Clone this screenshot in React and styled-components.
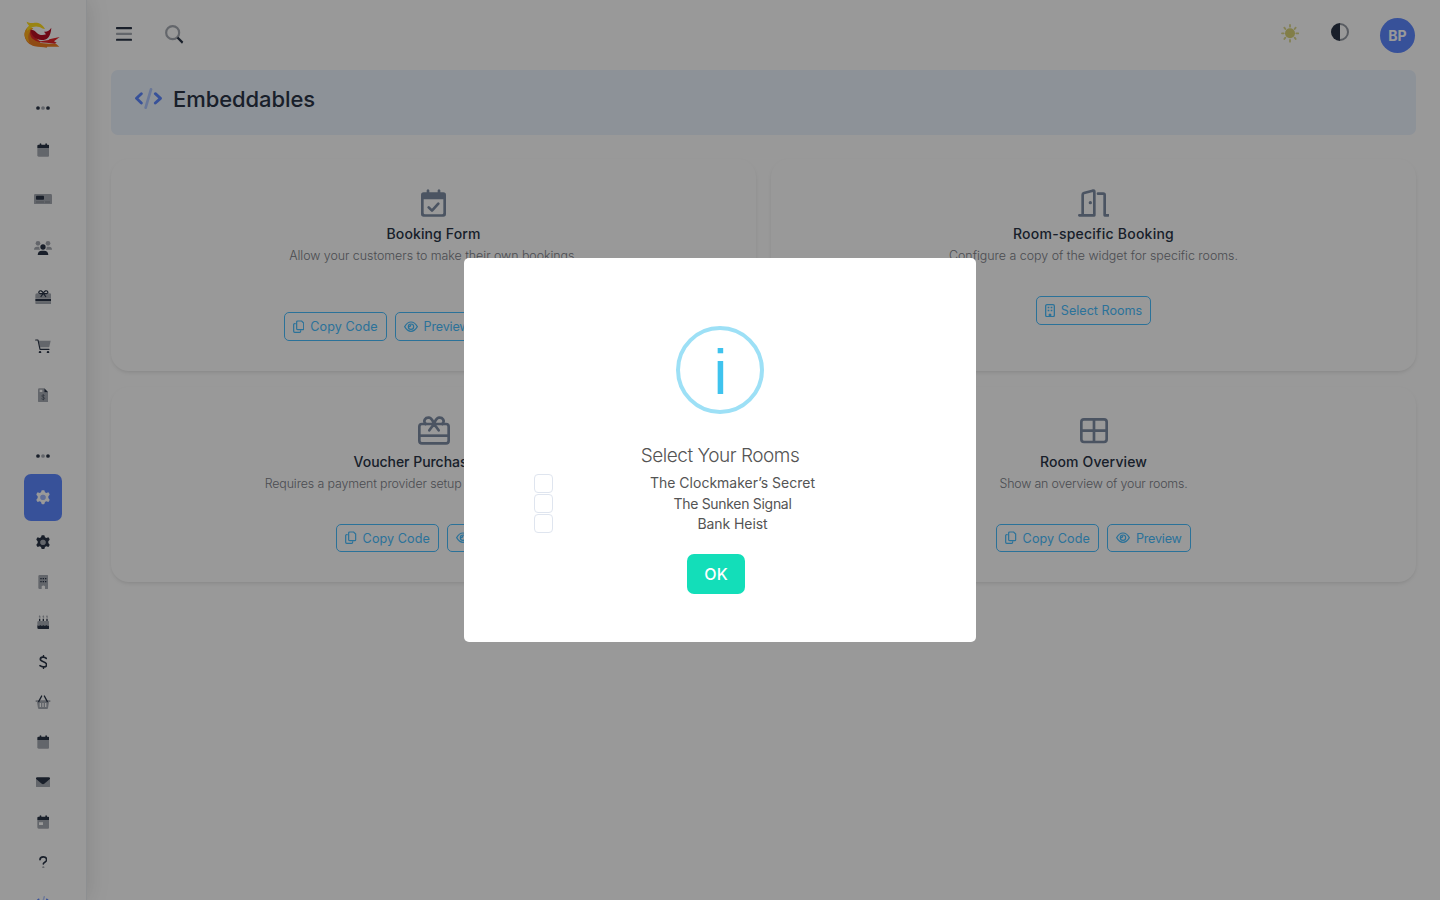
import React from "react"
import styled, { createGlobalStyle } from "styled-components"

const GlobalStyle = createGlobalStyle`
  * {
    box-sizing: border-box;
  }
  body {
    margin: 0;
    overflow: hidden;
    background: #fff;
    color: #2a3547;
    font-family: Inter, "Liberation Sans", sans-serif;
    font-size: 14px;
  }
`

const Page = styled.div`
  display: flex;
  height: 900px;
  overflow: hidden;
`

const Sidebar = styled.aside`
  flex: none;
  display: flex;
  flex-direction: column;
  align-items: center;
  width: 87px;
  height: 900px;
  overflow: hidden;
  border-right: 1px solid #eceef2;
  box-shadow: 0 0 22px rgba(0, 0, 0, 0.13);
`

const Brand = styled.div`
  flex: none;
  height: 90px;
  padding: 21px 1px 0 0;
`

const NavDivider = styled.div`
  flex: none;
  display: flex;
  align-items: center;
  height: ${p => (p.$spaced ? 54.4 : 35.6)}px;
  padding-top: ${p => (p.$spaced ? 19 : 0)}px;
`

const NavItem = styled.a`
  flex: none;
  display: flex;
  align-items: center;
  justify-content: center;
  width: 38px;
  height: ${p => (p.$sub ? 40 : 49)}px;
  color: ${p => p.$color || "#2a3547"};
`

const ActiveItem = styled(NavItem)`
  height: 47px;
  margin-bottom: 1px;
  border-radius: 7px;
  background: #5d87ff;
  color: #fff;
`

const Main = styled.main`
  flex: 1;
  padding: 0 24px;
`

const Header = styled.header`
  display: flex;
  align-items: center;
  height: 70px;
  padding: 0 1px 0 5px;
`

const HeaderIcon = styled.div`
  display: flex;
  width: ${p => p.$width}px;
  margin-top: ${p => p.$drop || 0}px;
`

const Spacer = styled.div`
  flex: 1;
`

const Avatar = styled.div`
  display: flex;
  align-items: center;
  justify-content: center;
  width: 35px;
  height: 35px;
  margin-top: 1px;
  padding-bottom: 1px;
  border-radius: 50%;
  background: #5d87ff;
  color: #fff;
  font-size: 14px;
  font-weight: 700;
`

const TitleBar = styled.div`
  display: flex;
  height: 65px;
  padding: 15px 24px 0;
  gap: 11px;
  border-radius: 7px;
  background: #ebf3fe;
`

const TitleIcon = styled.div`
  padding-top: 3px;
  color: #5d87ff;
`

const PageTitle = styled.h1`
  margin: 0;
  font-size: 22px;
  font-weight: 500;
  line-height: 28px;
  letter-spacing: -0.08px;
`

const Cards = styled.div`
  display: grid;
  grid-template-columns: 1fr 1fr;
  gap: 16px 15px;
  margin-top: 24px;
`

const Card = styled.section`
  display: flex;
  flex-direction: column;
  align-items: center;
  padding-bottom: 30px;
  border-radius: 18px;
  background: #fff;
  box-shadow: 0 2px 4px -1px rgba(0, 0, 0, 0.13);
`

const CardIcon = styled.div`
  display: flex;
  align-items: center;
  height: 32px;
  margin-top: 28px;
  color: #7d8ca4;
`

const CardTitle = styled.h2`
  margin: 5px 0 0;
  font-size: 14px;
  font-weight: 500;
  line-height: 20px;
  letter-spacing: ${p => p.$track}px;
`

const CardText = styled.p`
  margin: 2px 0 0;
  color: #7c8088;
  font-size: 12.4px;
  font-weight: 300;
  line-height: 20px;
  letter-spacing: ${p => p.$track}px;
`

const Actions = styled.div`
  display: flex;
  gap: 8px;
  width: ${p => p.$width}px;
  margin-top: ${p => p.$top || 30}px;
`

const OutlineButton = styled.button`
  display: flex;
  align-items: center;
  gap: 6px;
  height: ${p => p.$height || 28}px;
  padding: 0 8px;
  border: 1px solid #49beff;
  border-radius: 5px;
  background: transparent;
  color: #49beff;
  font-family: inherit;
  font-size: 12.6px;
  font-weight: 400;
  letter-spacing: ${p => p.$track || 0}px;
  white-space: nowrap;
`

const Backdrop = styled.div`
  position: fixed;
  inset: 0;
  display: flex;
  align-items: center;
  justify-content: center;
  background: rgba(0, 0, 0, 0.4);
`

const Modal = styled.div`
  display: flex;
  flex-direction: column;
  align-items: center;
  width: 512px;
  height: 384px;
  padding: 68px 0 0;
  border-radius: 5px;
  background: #fff;
  color: #545454;
`

const InfoMark = styled.div`
  display: flex;
  align-items: center;
  justify-content: center;
  width: 88px;
  height: 88px;
  padding: 4px 0 0 1px;
  border: 4px solid #9de0f6;
  border-radius: 50%;
  color: #3fc3ee;
  font-family: "Liberation Sans", sans-serif;
  font-size: 62.5px;
  line-height: 75px;
`

const ModalTitle = styled.h3`
  margin: 29px 0 0;
  font-size: 19px;
  font-weight: 300;
  line-height: 25px;
  letter-spacing: -0.48px;
`

const RoomList = styled.div`
  width: 372px;
  margin-top: 5px;
`

const RoomRow = styled.label`
  display: flex;
  align-items: center;
  height: 20.4px;
`

const Checkbox = styled.input`
  appearance: none;
  flex: none;
  width: 19px;
  height: 19px;
  margin: 0;
  border: 1px solid #dfe5ef;
  border-radius: 4px;
`

const RoomName = styled.span`
  flex: 1;
  padding-left: 6px;
  line-height: 20px;
  text-align: center;
  letter-spacing: ${p => p.$track}px;
`

const OkButton = styled.button`
  width: 58px;
  height: 40px;
  margin: 20px 8px 0 0;
  border: 0;
  border-radius: 7px;
  background: #13deb9;
  color: #fff;
  font-family: inherit;
  font-size: 16px;
  font-weight: 500;
`

const Svg = styled.svg`
  display: block;
  flex: none;
`

const Faded = styled.g`
  opacity: 0.42;
`

// duotone icons are drawn on a grid three times their size
const Icon = ({ w, h, children }) => (
  <Svg width={w / 3} height={h / 3} viewBox={`0 0 ${w} ${h}`} fill="currentColor">
    {children}
  </Svg>
)

const Logo = () => (
  <Icon w={110} h={82}>
    <path
      fill="#ef7d22"
      d="M10 20C3 28 0 37 2 46c3 16 14 26 30 30 12 3 26 2 36 4l2-3h36l-10-9H76L50 66 20 28z"
    />
    <path fill="#ffae1c" d="M12 18C4 25 1 34 2 45c3 10 8 17 16 22C10 52 11 38 22 28l6-6z" />
    <path
      fill="#e5262a"
      d="M20 26c-4 10-1 22 8 29 10 8 24 10 40 10l24 3 6-3-8-4 17-13-31 7-2 2-24 4C38 58 26 42 20 26z"
    />
    <path
      fill="#b90f24"
      d="M20 26c1 17 14 30 33 31 17 0 27-9 29-37-6 9-12 13-22 12l6 8C56 44 44 42 38 35c-5-6-10-9-18-9z"
    />
    <path
      fill="#ffdc1f"
      d="M8 2c8 4 13 4 20 4 14-2 25 1 35 18-8-1-11-4-17-6-10-3-20-2-28 6l-9 6c-1-8 1-12 6-16C12 10 9 8 8 2z"
    />
  </Icon>
)

const Dots = () => (
  <Icon w={42} h={12}>
    <circle cx="6" cy="6" r="5.6" />
    <Faded>
      <circle cx="21" cy="6" r="5.6" />
    </Faded>
    <circle cx="36" cy="6" r="5.6" />
  </Icon>
)

const Calendar = ({ day }) => (
  <Icon w={38} h={42}>
    <Faded>
      <path
        fillRule="evenodd"
        d={`M1 15h36v22q0 4-4 4H5q-4 0-4-4z${day ? "M6 22v8h12v-8z" : ""}`}
      />
    </Faded>
    <path d="M1 15V8q0-3 4-3h3V2q2-3 5 0v3h12V2q2-3 5 0v3h3q4 0 4 3v7z" />
  </Icon>
)

const MoneyCard = () => (
  <Icon w={54} h={32}>
    <Faded>
      <rect width="54" height="32" rx="4" />
    </Faded>
    <rect x="6" y="5" width="24" height="12" rx="2" />
    <path opacity=".6" d="M6 23h24v2H6zM33 23h15v2H33z" />
  </Icon>
)

const Users = () => (
  <Icon w={54} h={44}>
    <Faded>
      <circle cx="12" cy="7" r="7" />
      <circle cx="42" cy="7" r="7" />
      <path d="M0 26q0-9 9-9h7q-1 6 3 9zM54 26q0-9-9-9h-7q1 6-3 9z" />
    </Faded>
    <circle cx="27" cy="18" r="8" />
    <path d="M11 43q0-14 13-14h6q13 0 13 14z" />
  </Icon>
)

const Gift = () => (
  <Icon w={50} h={44}>
    <Faded>
      <path d="M1 15q0-5 5-5h38q5 0 5 5v11H1zM1 35h48v4q0 4-5 4H6q-5 0-5-4z" />
    </Faded>
    <path d="M1 27h48v7H1z" />
    <path
      fill="none"
      stroke="currentColor"
      strokeWidth="3.5"
      d="M25 10c-3-8-10-10-13-5-3 6 5 7 13 5zm0 0c3-8 10-10 13-5 3 6-5 7-13 5zm0 0-8 11m8-11 8 11"
    />
  </Icon>
)

const Cart = () => (
  <Icon w={48} h={44}>
    <Faded>
      <path d="M11 5h36l-4 18q-1 2-3 2H15z" />
    </Faded>
    <path
      fill="none"
      stroke="currentColor"
      strokeLinecap="round"
      strokeLinejoin="round"
      strokeWidth="3.5"
      d="M2 3h7l6 28h27"
    />
    <circle cx="15" cy="40" r="3.8" />
    <circle cx="39" cy="40" r="3.8" />
  </Icon>
)

const Invoice = () => (
  <Icon w={32} h={44}>
    <Faded>
      <path
        fillRule="evenodd"
        d="M0 5q0-4 4-4h15v12h12v26q0 4-4 4H4q-4 0-4-4zm5 0v7h8V5z"
      />
    </Faded>
    <path d="M19 1l12 12H19z" />
    <path
      opacity=".55"
      fill="none"
      stroke="currentColor"
      strokeWidth="2.6"
      d="M20 23c-4-3-9-2-9 1 0 4 9 3 9 7 0 4-6 4-10 1m6-13v18"
    />
  </Icon>
)

const Gear = () => (
  <Icon w={42} h={44}>
    <path
      fillRule="evenodd"
      d="M17 1q4-1 8 0l2 6 4 2 6-2q3 3 4 7l-4 5v5l4 5q-1 4-4 7l-6-2-4 2-2 6q-4 1-8 0l-2-6-4-2-6 2q-3-3-4-7l4-5v-5l-4-5q1-4 4-7l6 2 4-2zm4 13a8 8 0 1 0 0 16 8 8 0 1 0 0-16z"
    />
    <Faded>
      <circle cx="21" cy="22" r="8" />
    </Faded>
  </Icon>
)

const Building = () => (
  <Icon w={32} h={42}>
    <Faded>
      <path d="M1 4q0-4 4-4h22q4 0 4 4v34q0 4-4 4h-6v-8q-5-5-10 0v8H5q-4 0-4-4z" />
    </Faded>
    <path d="M7 9h4v4H7zM14 9h4v4h-4zM21 9h4v4h-4zM7 18h4v4H7zM14 18h4v4h-4zM21 18h4v4h-4z" />
  </Icon>
)

const Cake = () => (
  <Icon w={38} h={42}>
    <Faded>
      <path d="M6 4q2-6 4 0t-2 4-2-4zM17 4q2-6 4 0t-2 4-2-4zM28 4q2-6 4 0t-2 4-2-4zM1 31V22q0-4 4-4h28q4 0 4 4v9q-6 3-9-1-5 5-9 0-5 5-9 0-4 4-9 1z" />
    </Faded>
    <path d="M6 11h4v7H6zM17 11h4v7h-4zM28 11h4v7h-4zM1 31q5 3 9-1 4 5 9 0 4 5 9 0 4 4 9 1v7q0 4-4 4H5q-4 0-4-4z" />
  </Icon>
)

const Dollar = () => (
  <Icon w={26} h={42}>
    <path d="M11.5 0h4v6h-4zM11.5 36h4v6h-4z" />
    <path
      fill="none"
      stroke="currentColor"
      strokeLinecap="round"
      strokeWidth="5"
      d="M22 10C17 5 4 4 4 13c0 9 19 6 19 16 0 9-14 8-20 3"
    />
  </Icon>
)

const Basket = () => (
  <Icon w={48} h={44}>
    <Faded>
      <path
        fillRule="evenodd"
        d="M2 16h44v5h-4l-3 18q-1 4-5 4H14q-4 0-5-4L6 21H2zm12 8v12h4V24zm8 0v12h4V24zm8 0v12h4V24z"
      />
    </Faded>
    <path
      fill="none"
      stroke="currentColor"
      strokeLinecap="round"
      strokeWidth="4"
      d="M20 3 11 20M28 3l9 17"
    />
  </Icon>
)

const Envelope = () => (
  <Icon w={42} h={32}>
    <Faded>
      <path d="M0 6l17 13q4 3 8 0L42 6v22q0 4-4 4H4q-4 0-4-4z" />
    </Faded>
    <path d="M0 6V4q0-3 4-3h34q4 0 4 3v2L25 20q-4 3-8 0z" />
  </Icon>
)

const Question = () => (
  <Icon w={26} h={38}>
    <path
      fill="none"
      stroke="currentColor"
      strokeLinecap="round"
      strokeWidth="5"
      d="M3 11c0-11 20-11 20 0 0 8-10 7-10 13"
    />
    <Faded>
      <circle cx="13" cy="34" r="3.3" />
    </Faded>
  </Icon>
)

const Code = ({ scale = 1 }) => (
  <Svg
    width={27 * scale}
    height={21 * scale}
    viewBox="0 0 81 63"
    fill="none"
    stroke="currentColor"
    strokeLinecap="round"
  >
    <path strokeLinejoin="round" strokeWidth="8.5" d="M19 17 4.5 31 19 45M61 17l15.5 14L61 45" />
    <Faded>
      <path strokeWidth="8" d="M48 4 32 59" />
    </Faded>
  </Svg>
)

const Bars = () => (
  <Icon w={48} h={42}>
    <rect width="48" height="6.5" rx="2" />
    <rect y="35" width="48" height="6.5" rx="2" />
    <Faded>
      <rect y="17.5" width="48" height="6.5" rx="2" />
    </Faded>
  </Icon>
)

const Search = () => (
  <Icon w={56} h={56}>
    <Faded>
      <circle cx="23" cy="23" r="19.5" fill="none" stroke="currentColor" strokeWidth="6.5" />
    </Faded>
    <path d="M35 40l5-5 15 15-4 6z" />
  </Icon>
)

const Sun = () => (
  <Icon w={54} h={56}>
    <circle cx="27" cy="28" r="15" fill="#d9d378" />
    <g stroke="#dcd88e" strokeWidth="5.5" strokeLinecap="round">
      <path d="M27 3v5M27 48v5M3 28h5M46 28h6M10 11l3 4M41 41l3 4M44 11l-3 4M13 41l-3 4" />
    </g>
  </Icon>
)

const Contrast = () => (
  <Icon w={54} h={54}>
    <path d="M27 0a27 27 0 0 0 0 54z" />
    <path opacity=".5" d="M27 0a27 27 0 0 1 0 54v-6a21 21 0 0 0 0-42z" />
  </Icon>
)

const CalendarCheck = () => (
  <Icon w={75} h={84}>
    <path
      fillRule="evenodd"
      d="M17 10V4q4-7 8 0v6h25V4q4-7 8 0v6h9q8 0 8 8v57q0 8-8 8H8q-8 0-8-8V18q0-8 8-8zM8 31v41q0 4 4 4h51q4 0 4-4V31z"
    />
    <path
      fill="none"
      stroke="currentColor"
      strokeLinecap="round"
      strokeLinejoin="round"
      strokeWidth="8"
      d="m23 55 10 10 19-21"
    />
  </Icon>
)

const DoorOpen = () => (
  <Icon w={95} h={84}>
    <path
      fill="none"
      stroke="currentColor"
      strokeLinecap="round"
      strokeLinejoin="round"
      strokeWidth="8"
      d="M4 79h45V8q0-4-5-3L18 12q-4 1-4 5v62M60 14h16q4 0 4 4v61h11"
    />
    <circle cx="37" cy="41" r="5" />
  </Icon>
)

const GiftCard = () => (
  <Icon w={96} h={88}>
    <g fill="none" stroke="currentColor" strokeWidth="8">
      <rect x="4" y="24" width="88" height="58" rx="8" />
      <path d="M4 59h88" />
      <path
        strokeLinecap="round"
        d="M23 24c-9-10-1-20 10-19 9 1 12 12 15 19 3-7 6-18 15-19 11-1 19 9 10 19M48 24 34 43M48 24l14 19"
      />
    </g>
  </Icon>
)

const Table = () => (
  <Icon w={84} h={76}>
    <g fill="none" stroke="currentColor" strokeWidth="8">
      <rect x="4" y="4" width="76" height="68" rx="8" />
      <path d="M42 4v68M4 38h76" />
    </g>
  </Icon>
)

const Copy = () => (
  <Icon w={34} h={40}>
    <g fill="none" stroke="currentColor" strokeWidth="3.6">
      <path d="M14 3h12l6 6v17q0 3-3 3H14q-3 0-3-3V6q0-3 3-3z" />
      <path d="M8 11H5q-3 0-3 3v20q0 3 3 3h15q3 0 3-3v-3" />
    </g>
  </Icon>
)

const Eye = () => (
  <Icon w={42} h={34}>
    <g fill="none" stroke="currentColor" strokeWidth="3.6">
      <path d="M2 17Q10 3 21 3t19 14Q32 31 21 31T2 17z" />
      <circle cx="21" cy="17" r="8" />
      <path d="M20 11q1 5-5 6" />
    </g>
  </Icon>
)

const Rooms = () => (
  <Icon w={30} h={40}>
    <rect x="2" y="2" width="26" height="36" rx="4" fill="none" stroke="currentColor" strokeWidth="3.8" />
    <path d="M8 8h5v5H8zM17 8h5v5h-5zM8 17h5v5H8zM17 17h5v5h-5zM11 38v-7q4-5 8 0v7z" />
  </Icon>
)

const CopyButton = ({ height }) => (
  <OutlineButton $height={height} $track={0.07}>
    <Copy />
    Copy Code
  </OutlineButton>
)

const PreviewButton = ({ height }) => (
  <OutlineButton $height={height} $track={-0.2}>
    <Eye />
    Preview
  </OutlineButton>
)

const rooms = [
  { name: "The Clockmaker’s Secret", track: 0 },
  { name: "The Sunken Signal", track: -0.3 },
  { name: "Bank Heist", track: -0.08 },
]

const mainNav = [Calendar, MoneyCard, Users, Gift, Cart, Invoice]
const subNav = [Gear, Building, Cake, Dollar, Basket, Calendar, Envelope]

export default function App() {
  return (
    <>
      <GlobalStyle />
      <Page>
        <Sidebar>
          <Brand>
            <Logo />
          </Brand>
          <NavDivider>
            <Dots />
          </NavDivider>
          {mainNav.map((Glyph, i) => (
            <NavItem key={i}>
              <Glyph />
            </NavItem>
          ))}
          <NavDivider $spaced>
            <Dots />
          </NavDivider>
          <ActiveItem>
            <Gear />
          </ActiveItem>
          {subNav.map((Glyph, i) => (
            <NavItem key={i} $sub>
              <Glyph />
            </NavItem>
          ))}
          <NavItem $sub>
            <Calendar day />
          </NavItem>
          <NavItem $sub>
            <Question />
          </NavItem>
          <NavItem $sub $color="#5d87ff">
            <Code scale={0.58} />
          </NavItem>
        </Sidebar>
        <Main>
          <Header>
            <HeaderIcon $width={49} $drop={-2}>
              <Bars />
            </HeaderIcon>
            <HeaderIcon $width={40} $drop={-1}>
              <Search />
            </HeaderIcon>
            <Spacer />
            <HeaderIcon $width={50} $drop={-3}>
              <Sun />
            </HeaderIcon>
            <HeaderIcon $width={49} $drop={-6}>
              <Contrast />
            </HeaderIcon>
            <Avatar>BP</Avatar>
          </Header>
          <TitleBar>
            <TitleIcon>
              <Code />
            </TitleIcon>
            <PageTitle>Embeddables</PageTitle>
          </TitleBar>
          <Cards>
            <Card>
              <CardIcon>
                <CalendarCheck />
              </CardIcon>
              <CardTitle $track={0.12}>Booking Form</CardTitle>
              <CardText $track={-0.03}>Allow your customers to make their own bookings.</CardText>
              <Actions $width={299} $top={46}>
                <CopyButton height={29} />
                <PreviewButton height={29} />
              </Actions>
            </Card>
            <Card>
              <CardIcon>
                <DoorOpen />
              </CardIcon>
              <CardTitle $track={0.24}>Room-specific Booking</CardTitle>
              <CardText $track={0}>Configure a copy of the widget for specific rooms.</CardText>
              <Actions>
                <OutlineButton $height={29}>
                  <Rooms />
                  Select Rooms
                </OutlineButton>
              </Actions>
            </Card>
            <Card>
              <CardIcon>
                <GiftCard />
              </CardIcon>
              <CardTitle $track={-0.04}>Voucher Purchase Form</CardTitle>
              <CardText $track={-0.12}>Requires a payment provider setup to take payments online.</CardText>
              <Actions>
                <CopyButton />
                <PreviewButton />
              </Actions>
            </Card>
            <Card>
              <CardIcon>
                <Table />
              </CardIcon>
              <CardTitle $track={0.12}>Room Overview</CardTitle>
              <CardText $track={-0.17}>Show an overview of your rooms.</CardText>
              <Actions>
                <CopyButton />
                <PreviewButton />
              </Actions>
            </Card>
          </Cards>
        </Main>
      </Page>
      <Backdrop>
        <Modal>
          <InfoMark>i</InfoMark>
          <ModalTitle>Select Your Rooms</ModalTitle>
          <RoomList>
            {rooms.map(room => (
              <RoomRow key={room.name}>
                <Checkbox type="checkbox" />
                <RoomName $track={room.track}>{room.name}</RoomName>
              </RoomRow>
            ))}
          </RoomList>
          <OkButton>OK</OkButton>
        </Modal>
      </Backdrop>
    </>
  )
}
